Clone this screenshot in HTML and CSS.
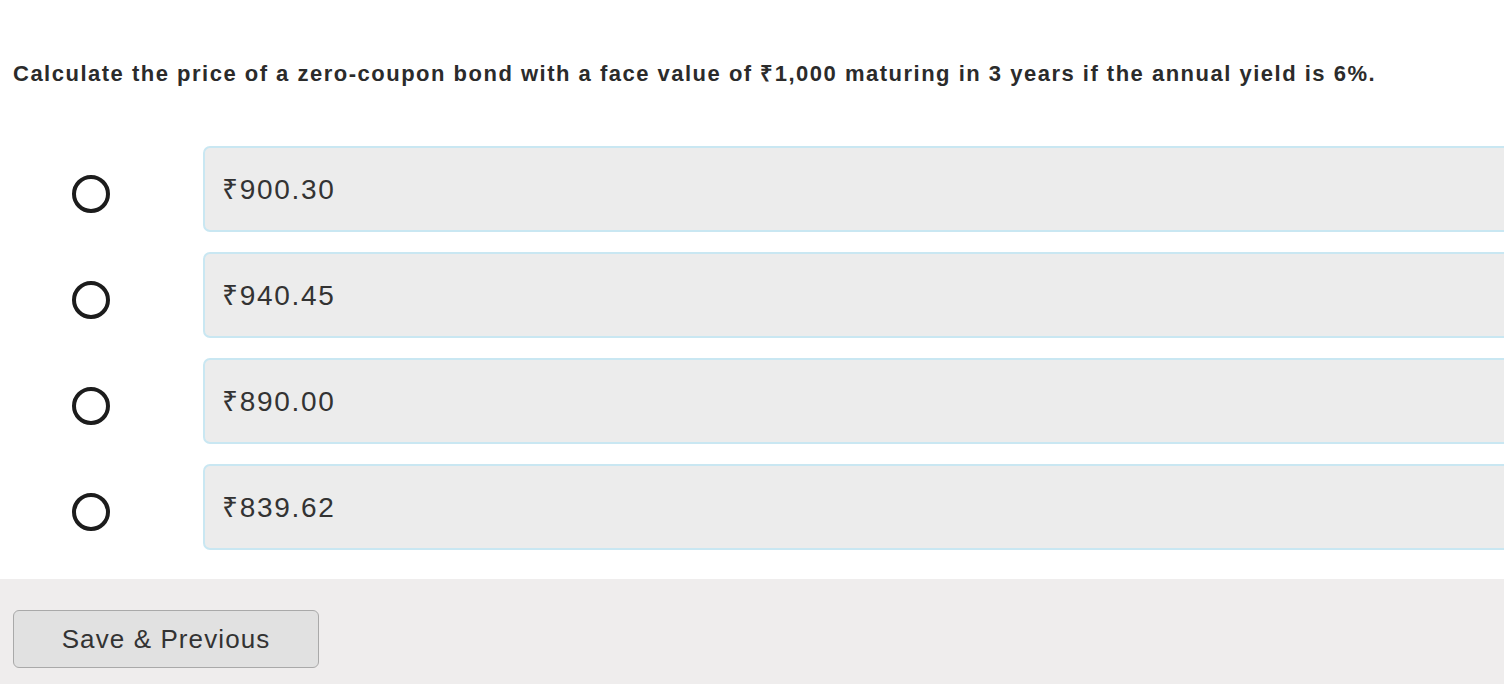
FILE: index.html
```html
<!DOCTYPE html>
<html lang="en">
<head>
<meta charset="utf-8">
<title>Question</title>
<link rel="stylesheet" href="styles.css">
</head>
<body>
<main class="page">
  <section class="question">
    <p class="question-text">Calculate the price of a zero-coupon bond with a face value of ₹1,000 maturing in 3 years if the annual yield is 6%.</p>
  </section>
  <ul class="options">
    <li class="option"><span class="radio"></span><div class="option-box">₹900.30</div></li>
    <li class="option"><span class="radio"></span><div class="option-box">₹940.45</div></li>
    <li class="option"><span class="radio"></span><div class="option-box">₹890.00</div></li>
    <li class="option"><span class="radio"></span><div class="option-box">₹839.62</div></li>
  </ul>
  <footer class="footer">
    <button class="btn" type="button">Save &amp; Previous</button>
  </footer>
</main>
</body>
</html>
```

FILE: styles.css
```css
html, body {
  margin: 0;
  padding: 0;
  background: #ffffff;
  overflow: hidden;
}
body {
  font-family: "Liberation Sans", Arial, sans-serif;
  color: #333333;
}
.page {
  width: 1504px;
  height: 684px;
  display: flex;
  flex-direction: column;
}
.question {
  padding: 62px 0 0 13px;
}
.question-text {
  margin: 0;
  font-size: 22px;
  font-weight: bold;
  letter-spacing: 1.5px;
  line-height: 24px;
  color: #2b2b2b;
  white-space: nowrap;
}
.options {
  list-style: none;
  margin: 0;
  padding: 60px 0 0 0;
  display: flex;
  flex-direction: column;
  gap: 20px;
}
.option {
  display: flex;
  align-items: center;
  height: 86px;
}
.radio {
  flex: none;
  width: 38px;
  height: 38px;
  box-sizing: border-box;
  border: 4px solid #1c1c1c;
  border-radius: 50%;
  margin: 10px 93px 0 72px;
}
.option-box {
  flex: 1;
  height: 86px;
  box-sizing: border-box;
  margin-right: -20px;
  background: #ececec;
  border: 2px solid #c9e7f2;
  border-radius: 7px;
  display: flex;
  align-items: center;
  padding: 0 0 3px 17px;
  font-size: 28px;
  letter-spacing: 1.7px;
  color: #333333;
}
.footer {
  margin-top: 29px;
  flex: 1;
  background: #efeded;
  padding: 31px 0 0 13px;
}
.btn {
  width: 306px;
  height: 58px;
  background: #e1e1e1;
  border: 1.5px solid #a9a9a9;
  border-radius: 6px;
  font-family: "Liberation Sans", Arial, sans-serif;
  font-size: 26px;
  letter-spacing: 1.1px;
  color: #333333;
  padding: 0;
}
```
